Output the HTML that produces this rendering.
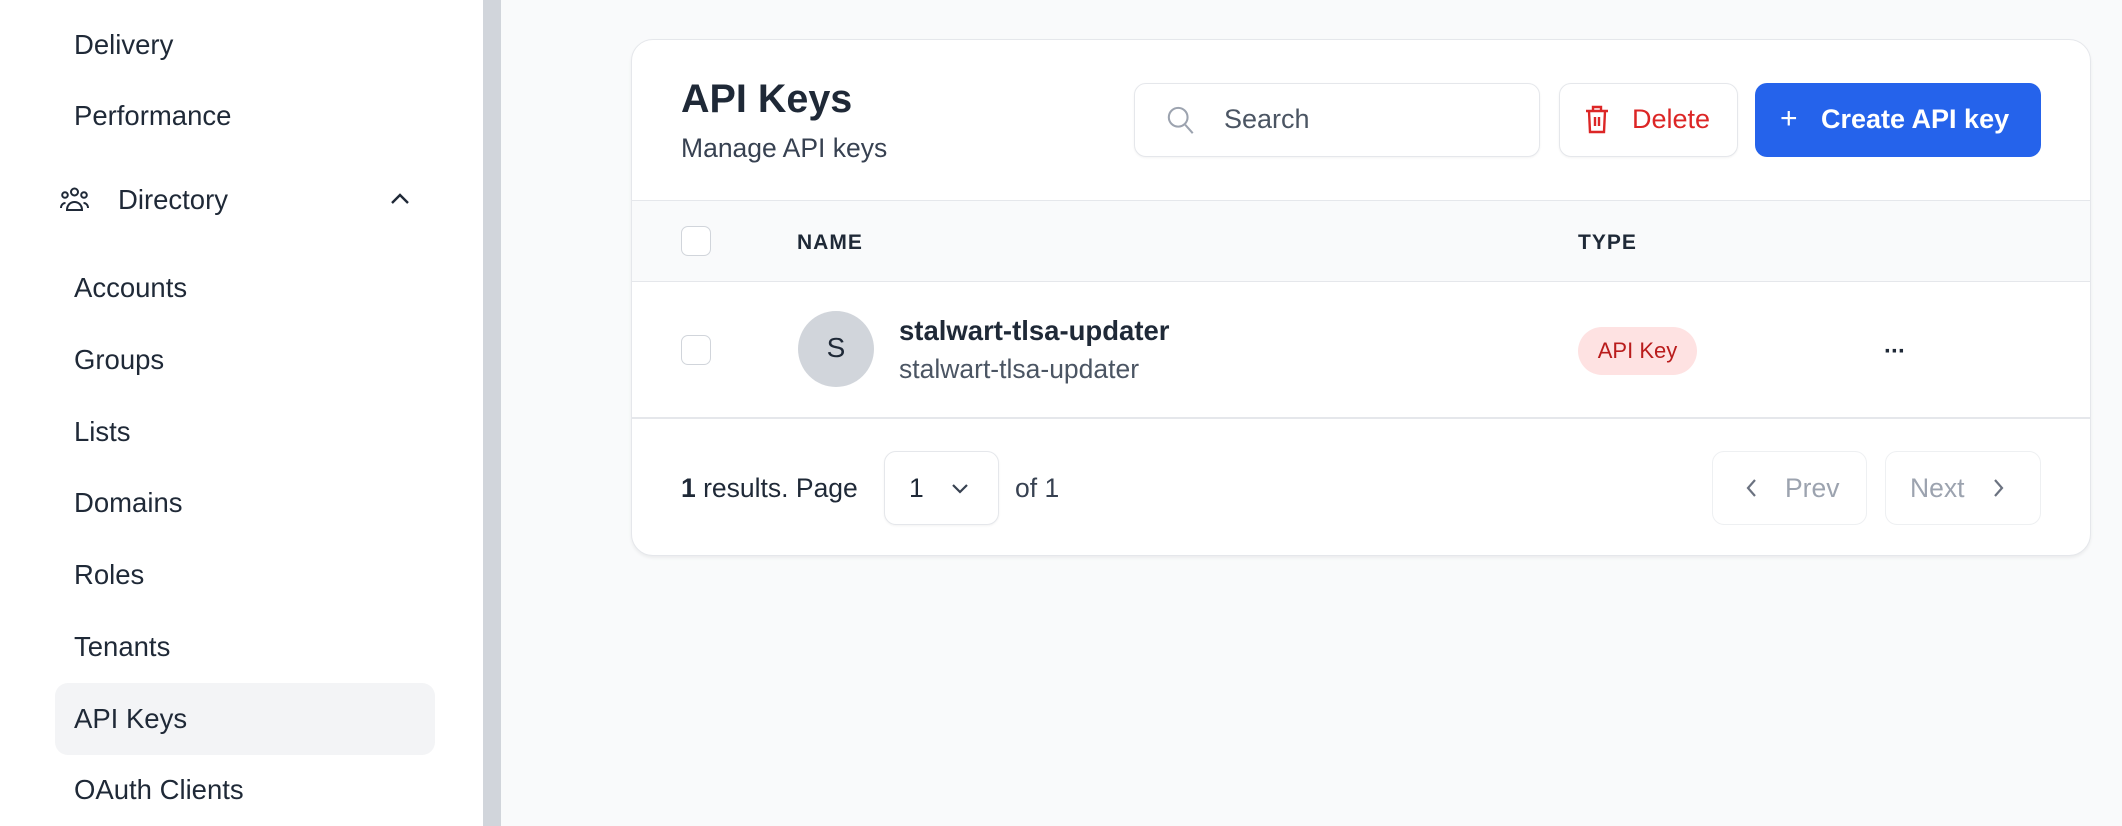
<!DOCTYPE html>
<html><head><meta charset="utf-8"><style>
*{box-sizing:border-box;margin:0;padding:0}
body{width:2122px;height:826px;overflow:hidden;background:#f9fafb;font-family:"Liberation Sans",Arial,sans-serif;color:#1f2937;position:relative}
.a{position:absolute}
.side{left:0;top:0;width:483px;height:826px;background:#fff}
.sb{left:483px;top:0;width:18px;height:826px;background:#d1d5db}
.nav{left:74px;font-size:27.5px;color:#1f2937;line-height:30px;transform:translateY(-15px)}
.card{left:631px;top:39px;width:1460px;height:517px;background:#fff;border:1.5px solid #e5e7eb;border-radius:22px;box-shadow:0 2px 3px rgba(0,0,0,.06);overflow:hidden}
.btn{border:1.5px solid #e5e7eb;border-radius:12px;background:#fff;box-shadow:0 1px 2px rgba(0,0,0,.05)}
.cb{width:30px;height:30px;border:1.5px solid #d1d5db;border-radius:7px;background:#fff}
.t{line-height:1;white-space:nowrap}
</style></head><body>
<div class="a side"></div>
<div class="a sb"></div>
<div class="a" style="left:55px;top:683px;width:380px;height:72px;background:#f3f4f6;border-radius:13px"></div>
<div class="a nav" style="top:45px">Delivery</div>
<div class="a nav" style="top:116px">Performance</div>
<svg class="a" style="left:59px;top:186px" width="31" height="28" viewBox="0 0 31 28" fill="none" stroke="#1f2937" stroke-width="2"><circle cx="15.5" cy="6" r="3.5"/><circle cx="6" cy="9" r="2.8"/><circle cx="25" cy="9" r="2.8"/><path d="M8 24c0-5 3.5-8 7.5-8s7.5 3 7.5 8zM2 22c0-3 2-5 4.5-5M29 22c0-3-2-5-4.5-5"/></svg>
<div class="a nav" style="top:200px;left:118px">Directory</div>
<svg class="a" style="left:389px;top:192px" width="22" height="14" viewBox="0 0 22 14" fill="none" stroke="#1f2937" stroke-width="2.4"><path d="M3 11l8-8 8 8"/></svg>
<div class="a nav" style="top:288px">Accounts</div>
<div class="a nav" style="top:360px">Groups</div>
<div class="a nav" style="top:432px">Lists</div>
<div class="a nav" style="top:503px">Domains</div>
<div class="a nav" style="top:575px">Roles</div>
<div class="a nav" style="top:647px">Tenants</div>
<div class="a nav" style="top:719px">API Keys</div>
<div class="a nav" style="top:790px">OAuth Clients</div>

<div class="a card">
  <div class="a" style="left:0;top:160px;width:100%;height:82px;background:#f9fafb;border-top:1.5px solid #e5e7eb;border-bottom:1.5px solid #e5e7eb"></div>
  <div class="a" style="left:0;top:377px;width:100%;height:1.5px;background:#e5e7eb"></div>
</div>
<div class="a t" style="left:681px;top:80px;font-size:39.5px;font-weight:bold;color:#1f2937">API Keys</div>
<div class="a t" style="left:681px;top:135px;font-size:26.5px;color:#374151">Manage API keys</div>
<div class="a btn" style="left:1134px;top:83px;width:406px;height:74px"></div>
<svg class="a" style="left:1166px;top:105px" width="30" height="32" viewBox="0 0 32 34" fill="none" stroke="#9ca3af" stroke-width="2.2"><circle cx="13" cy="13" r="10"/><path d="M20.5 21l8 9"/></svg>
<div class="a t" style="left:1224px;top:106px;font-size:27px;color:#4b5563">Search</div>
<div class="a btn" style="left:1559px;top:83px;width:179px;height:74px"></div>
<svg class="a" style="left:1585px;top:104px" width="24" height="30" viewBox="0 0 24 30" fill="none" stroke="#dc2626" stroke-width="2.4"><path d="M1 7h22M8 7V3h8v4M4 7l1 21h14l1-21M10 13v9M14 13v9"/></svg>
<div class="a t" style="left:1632px;top:106px;font-size:27px;color:#dc2626">Delete</div>
<div class="a" style="left:1755px;top:83px;width:286px;height:74px;background:#2563eb;border-radius:12px"></div>
<div class="a t" style="left:1780px;top:104px;font-size:30px;color:#fff">+</div>
<div class="a t" style="left:1821px;top:106px;font-size:27px;font-weight:bold;color:#fff">Create API key</div>

<div class="a cb" style="left:681px;top:226px"></div>
<div class="a t" style="left:797px;top:232px;font-size:21px;font-weight:bold;color:#1f2937;letter-spacing:1px">NAME</div>
<div class="a t" style="left:1578px;top:232px;font-size:21px;font-weight:bold;color:#1f2937;letter-spacing:1px">TYPE</div>

<div class="a cb" style="left:681px;top:335px"></div>
<div class="a" style="left:798px;top:311px;width:76px;height:76px;border-radius:50%;background:#d1d5db"></div>
<div class="a t" style="left:798px;top:334px;width:76px;text-align:center;font-size:28px;color:#1f2937">S</div>
<div class="a t" style="left:899px;top:317px;font-size:27.5px;font-weight:bold;color:#1f2937">stalwart-tlsa-updater</div>
<div class="a t" style="left:899px;top:356px;font-size:26.5px;color:#4b5563">stalwart-tlsa-updater</div>
<div class="a" style="left:1578px;top:327px;width:119px;height:48px;border-radius:24px;background:#fee2e2"></div>
<div class="a t" style="left:1578px;top:340px;width:119px;text-align:center;font-size:22px;color:#b91c1c">API Key</div>
<div class="a t" style="left:1884px;top:340px;font-size:24px;font-weight:bold;color:#1f2937;letter-spacing:-1px">···</div>

<div class="a t" style="left:681px;top:475px;font-size:26.5px;color:#1f2937"><b>1</b> results. Page</div>
<div class="a btn" style="left:884px;top:451px;width:115px;height:74px"></div>
<div class="a t" style="left:909px;top:475px;font-size:26.5px;color:#1f2937">1</div>
<svg class="a" style="left:950px;top:481px" width="20" height="14" viewBox="0 0 20 14" fill="none" stroke="#374151" stroke-width="2.2"><path d="M3 4l7 7 7-7"/></svg>
<div class="a t" style="left:1015px;top:475px;font-size:26.5px;color:#374151">of 1</div>
<div class="a btn" style="left:1712px;top:451px;width:155px;height:74px;box-shadow:none;border-color:#eef0f2"></div>
<svg class="a" style="left:1745px;top:477px" width="14" height="22" viewBox="0 0 14 22" fill="none" stroke="#6b7280" stroke-width="2.2"><path d="M10 3l-7 8 7 8"/></svg>
<div class="a t" style="left:1785px;top:475px;font-size:26.5px;color:#9ca3af">Prev</div>
<div class="a btn" style="left:1885px;top:451px;width:156px;height:74px;box-shadow:none;border-color:#eef0f2"></div>
<div class="a t" style="left:1910px;top:475px;font-size:26.5px;color:#9ca3af">Next</div>
<svg class="a" style="left:1991px;top:477px" width="14" height="22" viewBox="0 0 14 22" fill="none" stroke="#6b7280" stroke-width="2.2"><path d="M4 3l7 8-7 8"/></svg>
</body></html>
